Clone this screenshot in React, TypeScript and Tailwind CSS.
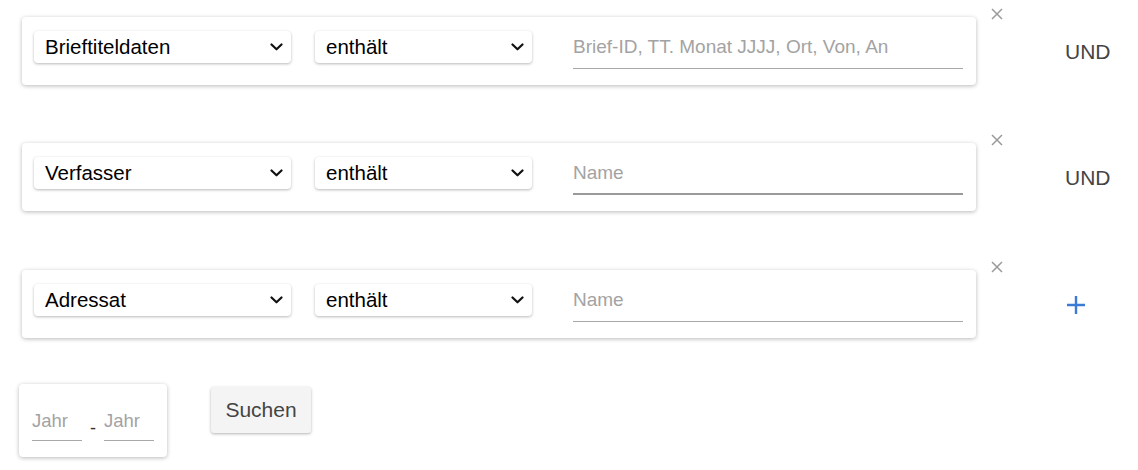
import React from 'react'

type Row = {
  field: string
  placeholder: string
  connector: 'und' | 'plus'
  active?: boolean
  gap: string
}

const rows: Row[] = [
  { field: 'Brieftiteldaten', placeholder: 'Brief-ID, TT. Monat JJJJ, Ort, Von, An', connector: 'und', gap: '' },
  { field: 'Verfasser', placeholder: 'Name', connector: 'und', active: true, gap: 'mt-[58px]' },
  { field: 'Adressat', placeholder: 'Name', connector: 'plus', gap: 'mt-[59px]' },
]

function Chevron() {
  return (
    <svg width="13" height="8" viewBox="0 0 13 8" fill="none">
      <path d="M1.5 1.5 L6.5 6.3 L11.5 1.5" stroke="#111" strokeWidth="2.2" strokeLinecap="round" strokeLinejoin="round" />
    </svg>
  )
}

function FakeSelect({ value, width }: { value: string; width: string }) {
  return (
    <div
      className={`${width} h-[32px] flex items-center justify-between pl-[11px] pr-[8px] bg-white rounded-[4px] shadow-[0_1px_3px_rgba(0,0,0,0.28)] text-[20.5px] text-black`}
    >
      <span>{value}</span>
      <Chevron />
    </div>
  )
}

export default function App() {
  return (
    <div className="min-h-screen bg-white pt-[17px] font-['Liberation_Sans',Arial,sans-serif]">
      <div className="flex flex-col">
        {rows.map((r, i) => (
          <div key={i} className={`flex ${r.gap}`}>
            <div className="ml-[22px] w-[954px] h-[68px] flex items-start pt-[14px] pl-[12px] bg-white rounded-[4px] shadow-[0_1px_4px_rgba(0,0,0,0.28)]">
              <FakeSelect value={r.field} width="w-[257px]" />
              <div className="ml-[24px]">
                <FakeSelect value="enthält" width="w-[217px]" />
              </div>
              <input
                placeholder={r.placeholder}
                className={`ml-[41px] w-[390px] h-[38px] pb-[5px] bg-transparent outline-none text-[19px] text-black placeholder:text-[#a3a3a3] ${
                  r.active ? 'border-b-2 border-[#9a9a9a]' : 'border-b border-[#a8a8a8]'
                }`}
              />
            </div>
            <button className="ml-[15px] -mt-[9px] self-start w-[12px] h-[12px]">
              <svg width="12" height="12" viewBox="0 0 12 12">
                <path d="M1 1 L11 11 M11 1 L1 11" stroke="#9a9a9a" strokeWidth="1.5" />
              </svg>
            </button>
            {r.connector === 'und' ? (
              <div className="ml-[62px] self-center mt-[2px] text-[21px] text-[#444]">UND</div>
            ) : (
              <button className="ml-[63px] self-center mt-[2px] w-[20px] h-[20px]">
                <svg width="20" height="20" viewBox="0 0 20 20">
                  <path d="M10 1 V19 M1 10 H19" stroke="#3b7bd6" strokeWidth="2.4" />
                </svg>
              </button>
            )}
          </div>
        ))}
      </div>

      <div className="flex items-start mt-[46px] ml-[19px]">
        <div className="w-[148px] h-[73px] flex items-start px-[13px] pt-[24px] bg-white rounded-[4px] shadow-[0_1px_4px_rgba(0,0,0,0.28)]">
          <input
            placeholder="Jahr"
            className="w-[50px] h-[33px] pb-[7px] bg-transparent outline-none border-b border-[#a8a8a8] text-[18.5px] placeholder:text-[#a3a3a3]"
          />
          <span className="w-[22px] text-center text-[18px] text-[#333] mt-[7px]">-</span>
          <input
            placeholder="Jahr"
            className="w-[50px] h-[33px] pb-[7px] bg-transparent outline-none border-b border-[#a8a8a8] text-[18.5px] placeholder:text-[#a3a3a3]"
          />
        </div>
        <button className="ml-[44px] mt-[3px] w-[100px] h-[46px] bg-[#f4f4f4] rounded-[3px] shadow-[0_1px_3px_rgba(0,0,0,0.3)] text-[21px] text-[#444]">
          Suchen
        </button>
      </div>
    </div>
  )
}
